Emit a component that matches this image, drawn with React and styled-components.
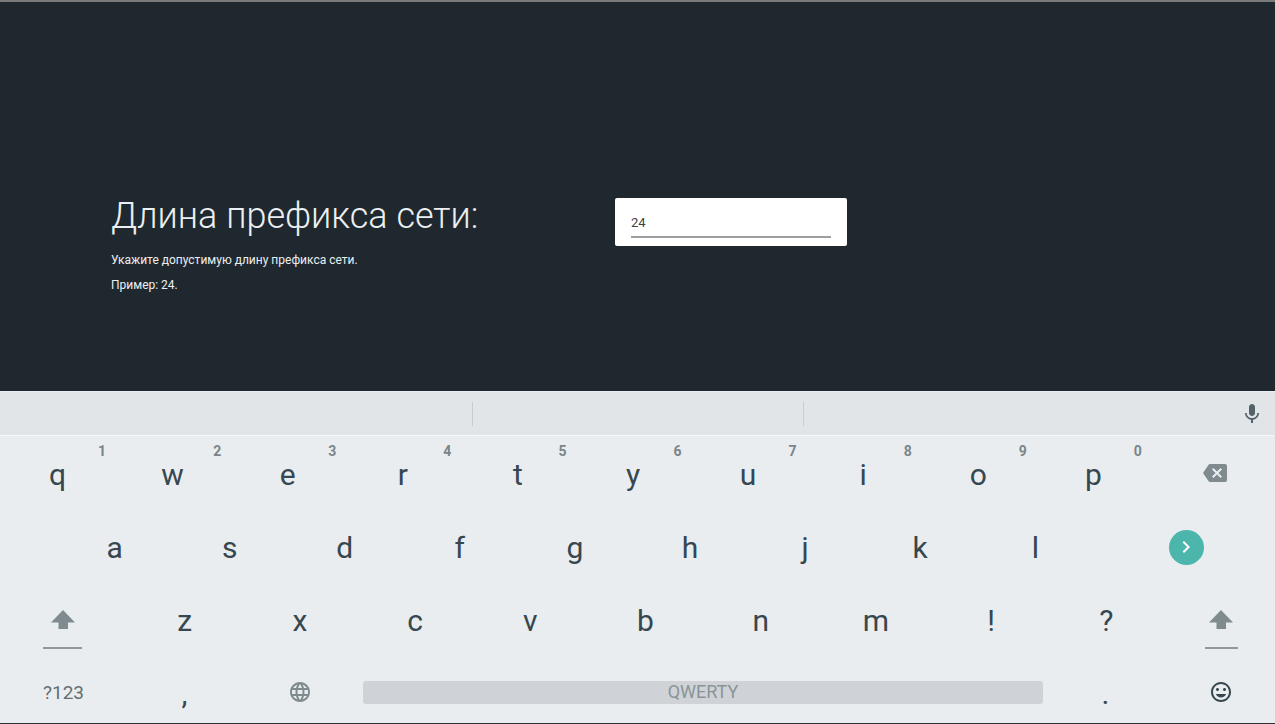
import React, { useState } from "react";
import styled, { createGlobalStyle } from "styled-components";
import { MdMic, MdBackspace, MdChevronRight, MdLanguage, MdInsertEmoticon } from "react-icons/md";

const GlobalStyle = createGlobalStyle`
  * { box-sizing: border-box; }
  body {
    margin: 0;
    background: #20282f;
    font-family: Roboto, "Liberation Sans", sans-serif;
  }
  button, input { font-family: inherit; margin: 0; }
`;

const Page = styled.div`
  display: flex;
  flex-direction: column;
  min-height: 100vh;
  border-top: 2px solid #7b7b7b;
  border-bottom: 1px solid #2d3135;
`;

const Setup = styled.main`
  flex: 1;
  display: grid;
  grid-template-columns: 504px minmax(0, 232px);
  align-items: start;
  padding: 192px 0 0 111px;
`;

const Title = styled.label`
  display: block;
  font-size: 36px;
  line-height: 44px;
  font-weight: 300;
  color: #eceff1;
`;

const Hint = styled.p`
  margin: ${(p) => (p.$first ? "14px" : "9px")} 0 0;
  font-size: 12px;
  line-height: 16px;
  color: #eceff1;
`;

const FieldCard = styled.div`
  height: 48px;
  margin-top: 4px;
  padding: 8px 16px;
  border-radius: 2px;
  background: #fff;
`;

const Field = styled.input`
  display: block;
  width: 100%;
  height: 32px;
  padding: 2px 0 0;
  border: 0;
  border-bottom: 2px solid #9e9e9e;
  border-radius: 0;
  outline: 0;
  background: transparent;
  font-size: 13px;
  color: #424242;
`;

const Keyboard = styled.section`
  background: #e9edf0;
`;

const Suggestions = styled.div`
  display: grid;
  grid-template-columns: 473fr 331fr 425fr 46fr;
  align-items: center;
  height: 45px;
  background: #e1e5e8;
  border-top: 1px solid #eceff1;
  border-bottom: 1px solid #f5f8fa;
`;

const Suggestion = styled.div`
  height: 24px;
  border-right: ${(p) => (p.$last ? "0" : "1px solid #c8cdd0")};
`;

const Row = styled.div`
  display: grid;
  grid-template-columns: ${(p) => p.$columns};
  height: ${(p) => (p.$short ? "68px" : "73px")};
  padding-left: ${(p) => (p.$indent ? "57px" : "0")};
`;

const Key = styled.button`
  position: relative;
  display: flex;
  align-items: center;
  justify-content: center;
  min-width: 0;
  padding: ${(p) => (p.$low ? "10px" : "4px")} 0 0;
  border: 0;
  background: transparent;
  font-size: 30px;
  line-height: 36px;
  color: #37474f;
`;

const Digit = styled.span`
  position: absolute;
  top: 7px;
  right: 9px;
  font-size: 14px;
  line-height: 16px;
  font-weight: 700;
  color: #7a8589;
`;

const ActionKey = styled(Key)`
  padding: ${(p) => (p.$bottom ? "6px" : "0")} 0 0 ${(p) => (p.$edge ? "4px" : "0")};
  font-size: 24px;
  line-height: 24px;
  color: ${(p) => (p.$dark ? "#37474f" : "#7f8b8f")};
`;

const SymbolsKey = styled(ActionKey)`
  padding: 8px 0 0;
  font-size: 19px;
  color: #636f74;
`;

const MicKey = styled(ActionKey)`
  color: #546269;
`;

const EnterKey = styled(ActionKey)`
  padding: 4px 0 0 6px;
`;

const EnterDisc = styled.span`
  display: flex;
  align-items: center;
  justify-content: center;
  width: 35px;
  height: 35px;
  padding: 0 2px 2px 0;
  border-radius: 50%;
  background: #4db6ac;
  color: #fff;
`;

const ShiftKey = styled(ActionKey)`
  flex-direction: column;
  gap: 18px;
  padding: 22px ${(p) => (p.$right ? "0" : "2px")} 0 ${(p) => (p.$right ? "4px" : "0")};
`;

const ShiftLine = styled.span`
  width: 31%;
  height: 2px;
  background: #8f999d;
`;

const SpaceKey = styled.button`
  align-self: center;
  height: 23px;
  margin: 7px 5px 0 6px;
  padding: 0 0 2px;
  border: 0;
  border-radius: 3px;
  background: #cfd3d7;
  font-size: 18px;
  line-height: 20px;
  color: #8a9498;
`;

const firstRow = ["q", "w", "e", "r", "t", "y", "u", "i", "o", "p"];
const secondRow = ["a", "s", "d", "f", "g", "h", "j", "k", "l"];
const thirdRow = ["z", "x", "c", "v", "b", "n", "m", "!", "?"];

function Shift({ right }) {
  return (
    <ShiftKey type="button" aria-label="Shift" $right={right}>
      <svg width="24" height="19" viewBox="0 0 24 19" fill="currentColor" aria-hidden="true">
        <path d="M12 0 24 12.5H17V19H7.5V12.5H0Z" />
      </svg>
      <ShiftLine />
    </ShiftKey>
  );
}

export default function App() {
  const [prefix, setPrefix] = useState("24");
  const type = (char) => () => setPrefix((value) => value + char);

  return (
    <>
      <GlobalStyle />
      <Page>
        <Setup>
          <div>
            <Title htmlFor="prefix">Длина префикса сети:</Title>
            <Hint $first>Укажите допустимую длину префикса сети.</Hint>
            <Hint>Пример: 24.</Hint>
          </div>
          <FieldCard>
            <Field id="prefix" value={prefix} onChange={(e) => setPrefix(e.target.value)} />
          </FieldCard>
        </Setup>
        <Keyboard>
          <Suggestions>
            <Suggestion />
            <Suggestion />
            <Suggestion $last />
            <MicKey type="button" aria-label="Voice input">
              <MdMic />
            </MicKey>
          </Suggestions>
          <Row $columns="repeat(10, 115fr) 124fr">
            {firstRow.map((char, i) => (
              <Key type="button" key={char} onClick={type(char)}>
                {char}
                <Digit>{(i + 1) % 10}</Digit>
              </Key>
            ))}
            <ActionKey type="button" aria-label="Backspace" $edge onClick={() => setPrefix(prefix.slice(0, -1))}>
              <MdBackspace />
            </ActionKey>
          </Row>
          <Row $indent $columns="repeat(9, 115fr) 182fr">
            {secondRow.map((char) => (
              <Key type="button" key={char} onClick={type(char)}>
                {char}
              </Key>
            ))}
            <EnterKey type="button" aria-label="Next">
              <EnterDisc>
                <MdChevronRight />
              </EnterDisc>
            </EnterKey>
          </Row>
          <Row $columns="127fr repeat(9, 115fr) 111fr">
            <Shift />
            {thirdRow.map((char) => (
              <Key type="button" key={char} onClick={type(char)}>
                {char}
              </Key>
            ))}
            <Shift right />
          </Row>
          <Row $short $columns="127fr 115fr 115fr 691fr 115fr 112fr">
            <SymbolsKey type="button">?123</SymbolsKey>
            <Key type="button" $low onClick={type(",")}>,</Key>
            <ActionKey type="button" aria-label="Change language" $bottom>
              <MdLanguage />
            </ActionKey>
            <SpaceKey type="button" onClick={type(" ")}>QWERTY</SpaceKey>
            <Key type="button" $low onClick={type(".")}>.</Key>
            <ActionKey type="button" aria-label="Emoji" $dark $bottom $edge>
              <MdInsertEmoticon />
            </ActionKey>
          </Row>
        </Keyboard>
      </Page>
    </>
  );
}
